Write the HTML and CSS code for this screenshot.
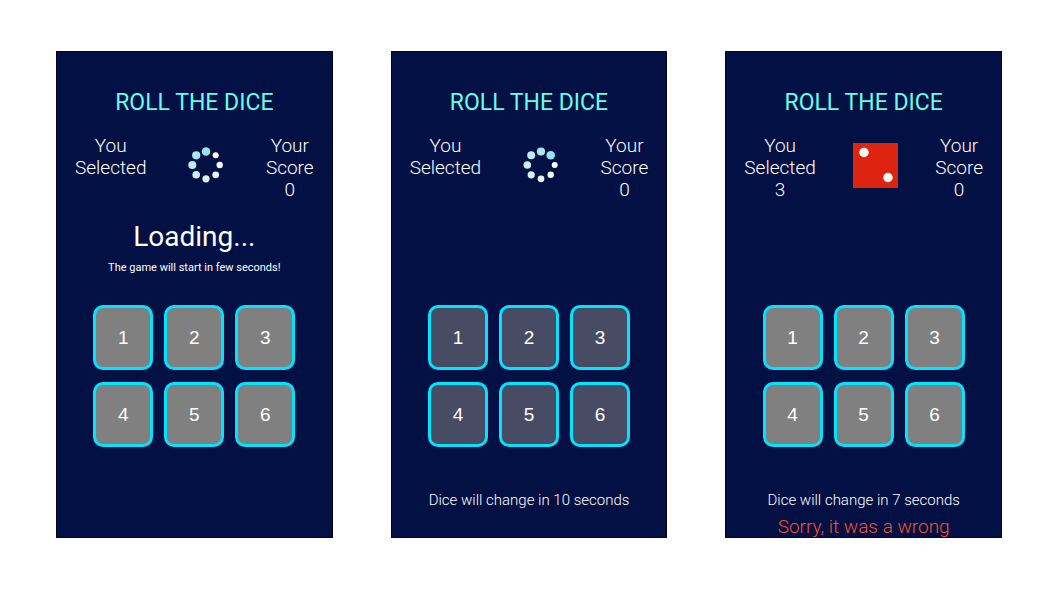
FILE: index.html
```html
<!DOCTYPE html>
<html lang="en">
<head>
<meta charset="utf-8">
<meta name="viewport" content="width=device-width, initial-scale=1">
<title>Roll the Dice</title>
<link rel="stylesheet" href="styles.css">
</head>
<body>
<main class="screens">
  <section class="game">
    <h1 class="title">ROLL THE DICE</h1>
    <div class="status">
      <div class="stat"><span>You</span><span>Selected</span></div>
      <svg class="spinner" viewBox="0 0 36 36" role="img" aria-label="Rolling">
        <circle cx="18" cy="4.500" r="4.300" fill="#9be0ec"/>
        <circle cx="27.700" cy="8.300" r="3" fill="#fff"/>
        <circle cx="31.700" cy="18" r="3.200" fill="#f4fcfd"/>
        <circle cx="27.700" cy="27.800" r="3.400" fill="#e6f7fa"/>
        <circle cx="18" cy="31.800" r="3.600" fill="#d9f4f8"/>
        <circle cx="8.200" cy="27.800" r="3.800" fill="#caeff5"/>
        <circle cx="4.300" cy="18" r="4" fill="#bcebf2"/>
        <circle cx="8.200" cy="8.300" r="4.100" fill="#abe5ef"/>
      </svg>
      <div class="stat"><span>Your</span><span>Score</span><span>0</span></div>
    </div>
    <div class="notice">
      <h2 class="loading">Loading...</h2>
      <p class="hint">The game will start in few seconds!</p>
    </div>
    <div class="choices">
      <button class="choice locked" type="button">1</button>
      <button class="choice locked" type="button">2</button>
      <button class="choice locked" type="button">3</button>
      <button class="choice locked" type="button">4</button>
      <button class="choice locked" type="button">5</button>
      <button class="choice locked" type="button">6</button>
    </div>
  </section>

  <section class="game">
    <h1 class="title">ROLL THE DICE</h1>
    <div class="status">
      <div class="stat"><span>You</span><span>Selected</span></div>
      <svg class="spinner" viewBox="0 0 36 36" role="img" aria-label="Rolling">
        <circle cx="18" cy="4.500" r="4.100" fill="#abe5ef"/>
        <circle cx="27.700" cy="8.300" r="4.300" fill="#9be0ec"/>
        <circle cx="31.700" cy="18" r="3" fill="#fff"/>
        <circle cx="27.700" cy="27.800" r="3.200" fill="#f4fcfd"/>
        <circle cx="18" cy="31.800" r="3.400" fill="#e6f7fa"/>
        <circle cx="8.200" cy="27.800" r="3.600" fill="#d9f4f8"/>
        <circle cx="4.300" cy="18" r="3.800" fill="#caeff5"/>
        <circle cx="8.200" cy="8.300" r="4" fill="#bcebf2"/>
      </svg>
      <div class="stat"><span>Your</span><span>Score</span><span>0</span></div>
    </div>
    <div class="notice"></div>
    <div class="choices">
      <button class="choice" type="button">1</button>
      <button class="choice" type="button">2</button>
      <button class="choice" type="button">3</button>
      <button class="choice" type="button">4</button>
      <button class="choice" type="button">5</button>
      <button class="choice" type="button">6</button>
    </div>
    <p class="timer">Dice will change in 10 seconds</p>
  </section>

  <section class="game">
    <h1 class="title">ROLL THE DICE</h1>
    <div class="status">
      <div class="stat"><span>You</span><span>Selected</span><span>3</span></div>
      <svg class="die" viewBox="0 0 45 45" role="img" aria-label="Two">
        <rect width="45" height="45" fill="#dc2410"/>
        <circle cx="11" cy="9.500" r="4.700" fill="#fff"/>
        <circle cx="35" cy="34.500" r="4.700" fill="#fff"/>
      </svg>
      <div class="stat"><span>Your</span><span>Score</span><span>0</span></div>
    </div>
    <div class="notice"></div>
    <div class="choices">
      <button class="choice locked" type="button">1</button>
      <button class="choice locked" type="button">2</button>
      <button class="choice locked" type="button">3</button>
      <button class="choice locked" type="button">4</button>
      <button class="choice locked" type="button">5</button>
      <button class="choice locked" type="button">6</button>
    </div>
    <p class="timer">Dice will change in 7 seconds</p>
    <p class="result">Sorry, it was a wrong</p>
  </section>
</main>
</body>
</html>
```
FILE: styles.css
```css
* {
  box-sizing: border-box;
}

body {
  margin: 0;
  background: #fff;
  font-family: Roboto, "Liberation Sans", sans-serif;
}

h1,
h2,
p {
  margin: 0;
}

.screens {
  display: grid;
  grid-template-columns: repeat(3, 1fr);
  gap: 58px;
  padding: 51px 53px 52px 56px;
}

.game {
  display: flex;
  flex-direction: column;
  overflow: hidden;
  padding: 37px 18px 0;
  border: 1px solid #02051c;
  background: #031044;
  color: #fff;
  text-align: center;
}

.title {
  color: #64ffec;
  font-size: 23px;
  font-weight: 400;
  line-height: 28px;
}

.status {
  display: flex;
  justify-content: space-between;
  min-height: 66px;
  margin-top: 18px;
}

.stat {
  display: flex;
  flex-direction: column;
  font-size: 19px;
  font-weight: 300;
  line-height: 22px;
}

.spinner {
  width: 36px;
  height: 36px;
  margin-top: 12px;
}

.die {
  width: 45px;
  height: 45px;
  margin-top: 8px;
}

.notice {
  height: 104px;
  padding-top: 18px;
}

.loading {
  font-size: 28px;
  font-weight: 400;
  line-height: 36px;
}

.hint {
  margin-top: 5px;
  font-size: 11px;
  line-height: 16px;
}

.choices {
  display: grid;
  grid-template-columns: repeat(3, 60px);
  justify-content: center;
  gap: 12px 11px;
}

.choice {
  height: 65px;
  padding: 0;
  border: 3px solid #00e5ff;
  border-radius: 10px;
  background: #474b63;
  color: #fff;
  font-family: "Liberation Sans", Arial, sans-serif;
  font-size: 19px;
}

.locked {
  background: #808080;
}

.timer {
  margin-top: 43px;
  font-size: 15px;
  font-weight: 300;
  line-height: 20px;
}

.result {
  height: 21px;
  margin-top: 6px;
  color: #f4512c;
  font-size: 19px;
  font-weight: 300;
  line-height: 22px;
}
```
